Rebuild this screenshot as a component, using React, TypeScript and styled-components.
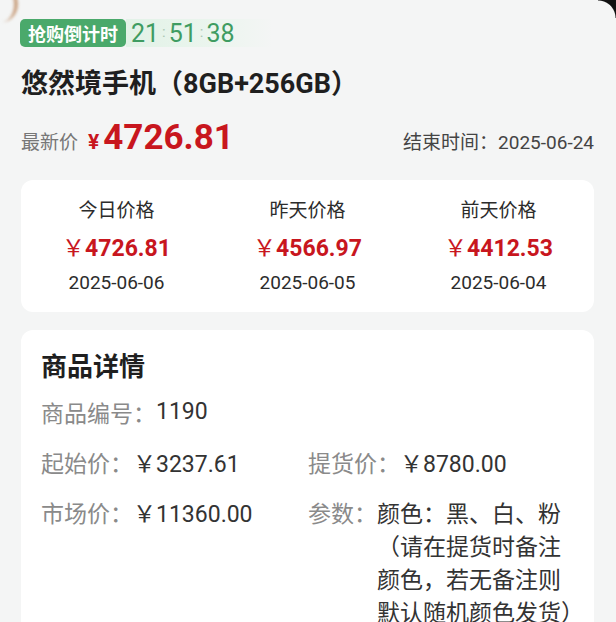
import styled, { createGlobalStyle } from 'styled-components'

const GlobalStyle = createGlobalStyle`
  html, body {
    margin: 0;
    padding: 0;
    background: #f4f5f5;
  }

  body {
    font-family: Roboto, "Noto Sans CJK SC", "Noto Sans", sans-serif;
    color: #2a2a2a;
  }
`

const Page = styled.div`
  position: relative;
  width: 616px;
  height: 622px;
  overflow: hidden;
  box-sizing: border-box;
  padding: 19px 22px 0 21px;
`

const CornerRight = styled.div`
  position: absolute;
  top: 0;
  right: 0;
  width: 18px;
  height: 18px;
  background: radial-gradient(circle at 0 100%, transparent 17px, #111 18px);
`

const CornerLeft = styled.div`
  position: absolute;
  top: -14px;
  left: -14px;
  width: 28px;
  height: 36px;
  border-radius: 50%;
  border-right: 4px solid rgba(176, 112, 60, 0.6);
  filter: blur(1.5px);
`

const CountdownRow = styled.div`
  display: flex;
  align-items: center;
  height: 28px;
  margin-left: -1px;
`

const Badge = styled.span`
  display: flex;
  align-items: center;
  height: 28px;
  padding: 0 8px 0 8px;
  border-radius: 5px;
  background: #4aa96b;
  color: #fff;
  font-weight: 700;
  font-size: 18px;
`

const Timer = styled.span`
  display: flex;
  align-items: center;
  height: 28px;
  width: 142px;
  padding-left: 5px;
  background: linear-gradient(90deg, #e2f2e7 0%, #ebf5ee 60%, rgba(244, 245, 245, 0) 100%);
  color: #3f9c62;
  font-size: 25px;
`

const Colon = styled.span`
  font-size: 15px;
  color: #a9c7b3;
  margin: 0 3px;
  position: relative;
  top: -1px;
`

const Title = styled.h1`
  margin: 19px 0 0;
  font-size: 27px;
  line-height: 36px;
  font-weight: 700;
  color: #1f1f1f;
`

const PriceRow = styled.div`
  display: flex;
  align-items: baseline;
  justify-content: space-between;
  margin-top: 15px;
  height: 44px;
`

const Latest = styled.div`
  display: flex;
  align-items: baseline;
`

const Muted = styled.span`
  font-size: 19px;
  color: #777;
`

const Yen = styled.span`
  margin-left: 10px;
  font-size: 21px;
  font-weight: 700;
  color: #c8161e;
`

const BigPrice = styled.span`
  margin-left: 4px;
  font-size: 35px;
  font-weight: 700;
  color: #c8161e;
`

const EndTime = styled.span`
  font-size: 19px;
  color: #444;
`

const Card = styled.section<{ $pad: string }>`
  background: #fff;
  border-radius: 12px;
  padding: ${p => p.$pad};
`

const HistoryCard = styled(Card)`
  margin-top: 19px;
  display: grid;
  grid-template-columns: repeat(3, 1fr);
`

const Day = styled.div`
  display: flex;
  flex-direction: column;
  align-items: center;
`

const DayLabel = styled.div`
  font-size: 19px;
  line-height: 26px;
  color: #2c2c2c;
`

const DayPrice = styled.div`
  margin-top: 10px;
  font-size: 23px;
  line-height: 30px;
  font-weight: 700;
  color: #c8161e;

  & > span {
    font-weight: 400;
  }
`

const DayDate = styled.div`
  margin-top: 6px;
  font-size: 19px;
  line-height: 26px;
  color: #2c2c2c;
`

const DetailCard = styled(Card)`
  margin-top: 18px;
  height: 400px;
`

const DetailTitle = styled.h2`
  margin: 0;
  font-size: 26px;
  line-height: 36px;
  font-weight: 700;
  color: #1f1f1f;
`

const Grid = styled.div`
  display: grid;
  grid-template-columns: 267px 1fr;
  row-gap: 17px;
  margin-top: 13px;
`

const Field = styled.div<{ $span?: boolean }>`
  display: flex;
  align-items: flex-start;
  font-size: 23px;
  line-height: 33px;
  grid-column: ${p => (p.$span ? '1 / -1' : 'auto')};
`

const Label = styled.span`
  color: #8a8a8a;
  white-space: nowrap;
`

const Value = styled.span<{ $raise?: boolean }>`
  color: #333;
  white-space: nowrap;
  position: relative;
  top: ${p => (p.$raise ? '-3px' : '0')};
`

const Lines = styled.div`
  display: flex;
  flex-direction: column;
  color: #333;
  white-space: nowrap;
`

const days = [
  { label: '今日价格', price: '4726.81', date: '2025-06-06' },
  { label: '昨天价格', price: '4566.97', date: '2025-06-05' },
  { label: '前天价格', price: '4412.53', date: '2025-06-04' },
]

const paramLines = ['颜色：黑、白、粉', '（请在提货时备注', '颜色，若无备注则', '默认随机颜色发货）']

export default function App () {
  return (
    <Page>
      <GlobalStyle />
      <CornerLeft />
      <CornerRight />

      <CountdownRow>
        <Badge>抢购倒计时</Badge>
        <Timer>
          21<Colon>:</Colon>51<Colon>:</Colon>38
        </Timer>
      </CountdownRow>

      <Title>悠然境手机（8GB+256GB）</Title>

      <PriceRow>
        <Latest>
          <Muted>最新价</Muted>
          <Yen>¥</Yen>
          <BigPrice>4726.81</BigPrice>
        </Latest>
        <EndTime>结束时间：2025-06-24</EndTime>
      </PriceRow>

      <HistoryCard $pad='18px 0 16px'>
        {days.map(d => (
          <Day key={d.label}>
            <DayLabel>{d.label}</DayLabel>
            <DayPrice><span>￥</span>{d.price}</DayPrice>
            <DayDate>{d.date}</DayDate>
          </Day>
        ))}
      </HistoryCard>

      <DetailCard $pad='19px 20px 0'>
        <DetailTitle>商品详情</DetailTitle>
        <Grid>
          <Field $span>
            <Label>商品编号：</Label>
            <Value $raise>1190</Value>
          </Field>
          <Field>
            <Label>起始价：</Label>
            <Value>￥3237.61</Value>
          </Field>
          <Field>
            <Label>提货价：</Label>
            <Value>￥8780.00</Value>
          </Field>
          <Field>
            <Label>市场价：</Label>
            <Value>￥11360.00</Value>
          </Field>
          <Field>
            <Label>参数：</Label>
            <Lines>
              {paramLines.map(l => <span key={l}>{l}</span>)}
            </Lines>
          </Field>
        </Grid>
      </DetailCard>
    </Page>
  )
}
